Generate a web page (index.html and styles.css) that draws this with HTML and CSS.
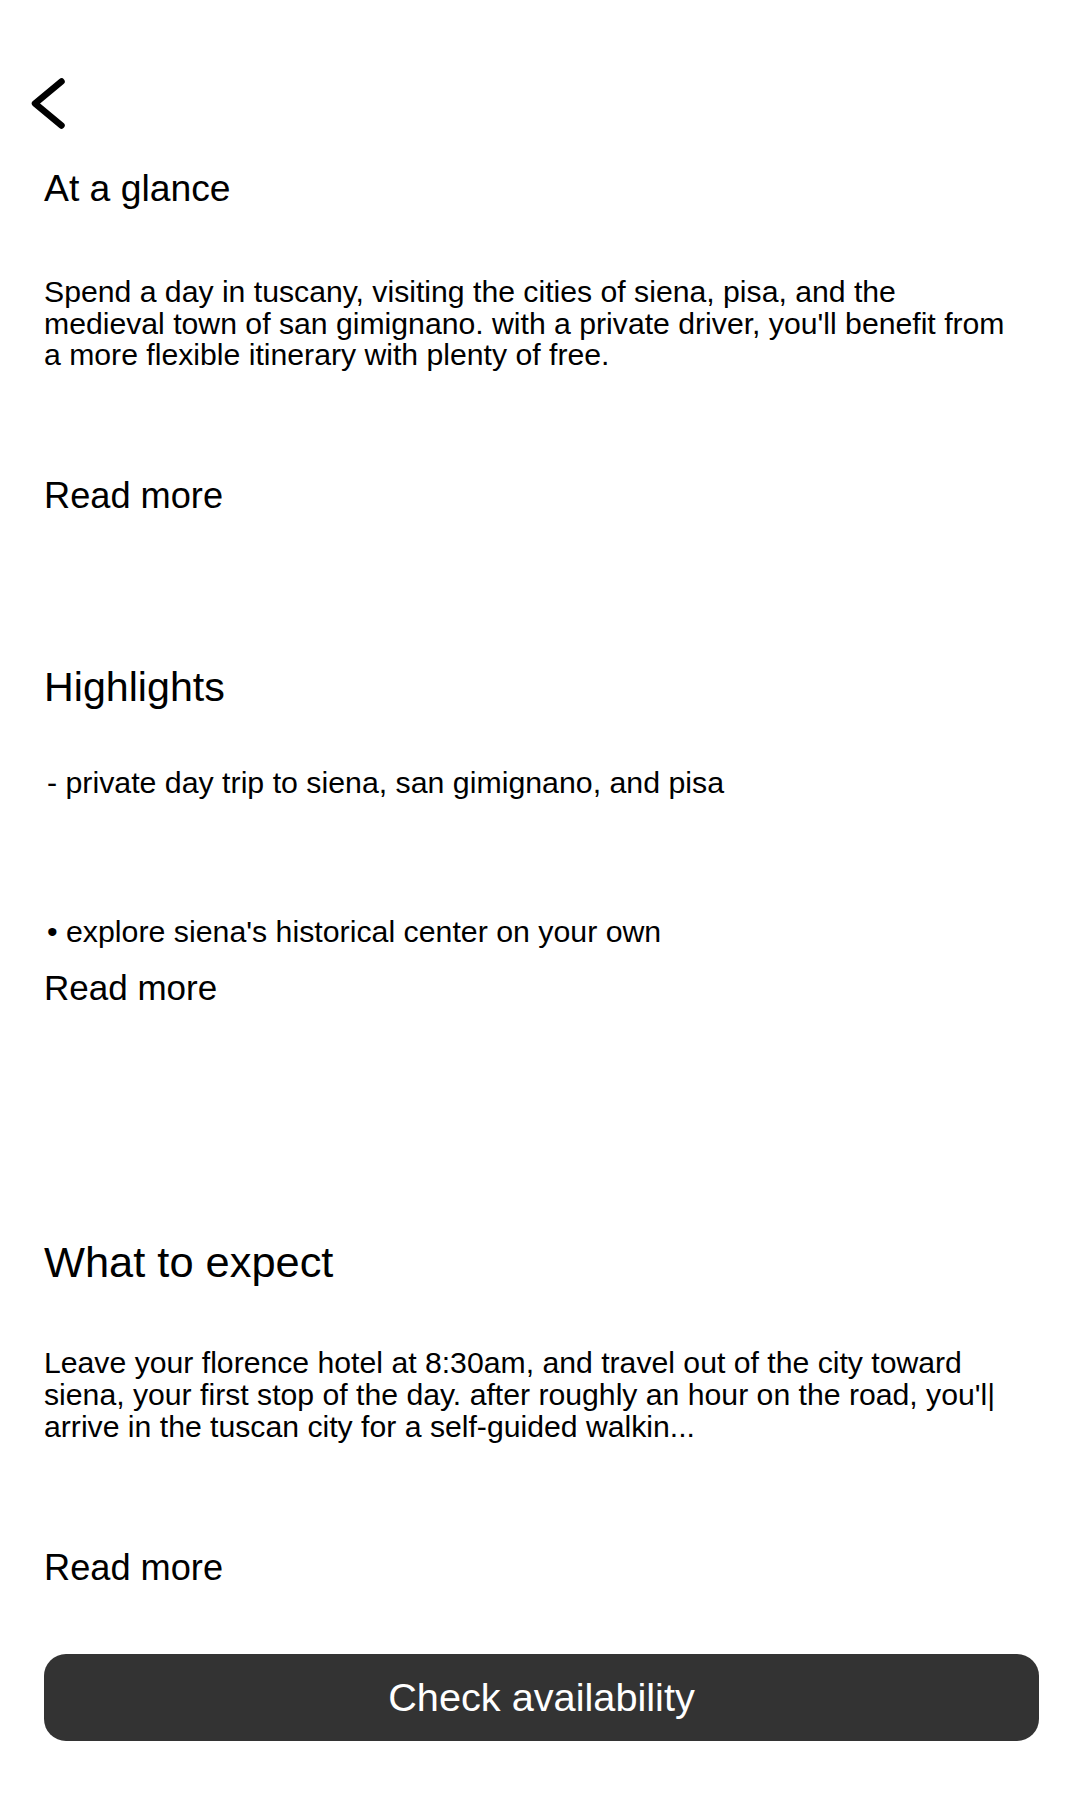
FILE: index.html
```html
<!DOCTYPE html>
<html lang="en">
<head>
<meta charset="utf-8">
<title>Tour details</title>
<link rel="stylesheet" href="styles.css">
</head>
<body>
<header class="topbar">
  <svg class="back-icon" width="40" height="60" viewBox="0 0 40 60" aria-label="Back">
    <polyline points="33.5,8.5 7,30.5 33.5,52.5" fill="none" stroke="#000" stroke-width="6.5" stroke-linecap="round" stroke-linejoin="round"/>
  </svg>
</header>
<main class="page">
  <section class="section">
    <h2 class="title title-glance">At a glance</h2>
    <p class="body-text body-glance">Spend a day in tuscany, visiting the cities of siena, pisa, and the medieval town of san gimignano. with a private driver, you'll benefit from a more flexible itinerary with plenty of free.</p>
    <a class="read-more read-more-glance">Read more</a>
  </section>

  <section class="section">
    <h2 class="title title-highlights">Highlights</h2>
    <p class="highlight highlight-first">- private day trip to siena, san gimignano, and pisa</p>
    <p class="highlight highlight-second">• explore siena's historical center on your own</p>
    <a class="read-more read-more-highlights">Read more</a>
  </section>

  <section class="section">
    <h2 class="title title-expect">What to expect</h2>
    <p class="body-text body-expect">Leave your florence hotel at 8:30am, and travel out of the city toward siena, your first stop of the day. after roughly an hour on the road, you'l| arrive in the tuscan city for a self-guided walkin...</p>
    <a class="read-more read-more-expect">Read more</a>
  </section>

  <button class="cta" type="button">Check availability</button>
</main>
</body>
</html>
```

FILE: styles.css
```css
* {
  box-sizing: border-box;
}

html, body {
  margin: 0;
  padding: 0;
  background: #ffffff;
}

body {
  font-family: "Liberation Sans", Arial, Helvetica, sans-serif;
  color: #000000;
  width: 1080px;
}

.topbar {
  padding: 73px 0 0 28px;
  height: 133px;
}

.back-icon {
  display: block;
}

.page {
  padding: 0 41px 0 44px;
}

.section {
  display: flex;
  flex-direction: column;
  align-items: flex-start;
}

.title {
  margin: 0;
  font-weight: normal;
}

.title-glance {
  font-size: 37.3px;
  line-height: 44px;
  margin-top: 33px;
}

.title-highlights {
  font-size: 41.2px;
  line-height: 46px;
  margin-top: 148px;
}

.title-expect {
  font-size: 43.4px;
  line-height: 50px;
  margin-top: 229px;
}

.body-text {
  margin: 0;
  font-size: 30.2px;
  max-width: 970px;
}

.body-glance {
  line-height: 31.5px;
  margin-top: 66px;
}

.body-expect {
  line-height: 32px;
  margin-top: 59.5px;
}

.highlight {
  margin: 0;
  font-size: 30.3px;
  line-height: 34px;
  padding-left: 3px;
}

.highlight-first {
  margin-top: 55.6px;
}

.highlight-second {
  margin-top: 115px;
}

.read-more {
  display: block;
  font-size: 36.2px;
  line-height: 40px;
  color: #000000;
  cursor: pointer;
}

.read-more-glance {
  margin-top: 105.5px;
}

.read-more-highlights {
  font-size: 35px;
  margin-top: 19.6px;
}

.read-more-expect {
  margin-top: 105.3px;
}

.cta {
  display: block;
  width: 100%;
  height: 87px;
  margin: 66px 0 0 0;
  border: none;
  border-radius: 22px;
  background: #333333;
  color: #ffffff;
  font-family: "Liberation Sans", Arial, Helvetica, sans-serif;
  font-size: 39.7px;
  line-height: 87px;
  padding: 0;
  text-align: center;
}
```
